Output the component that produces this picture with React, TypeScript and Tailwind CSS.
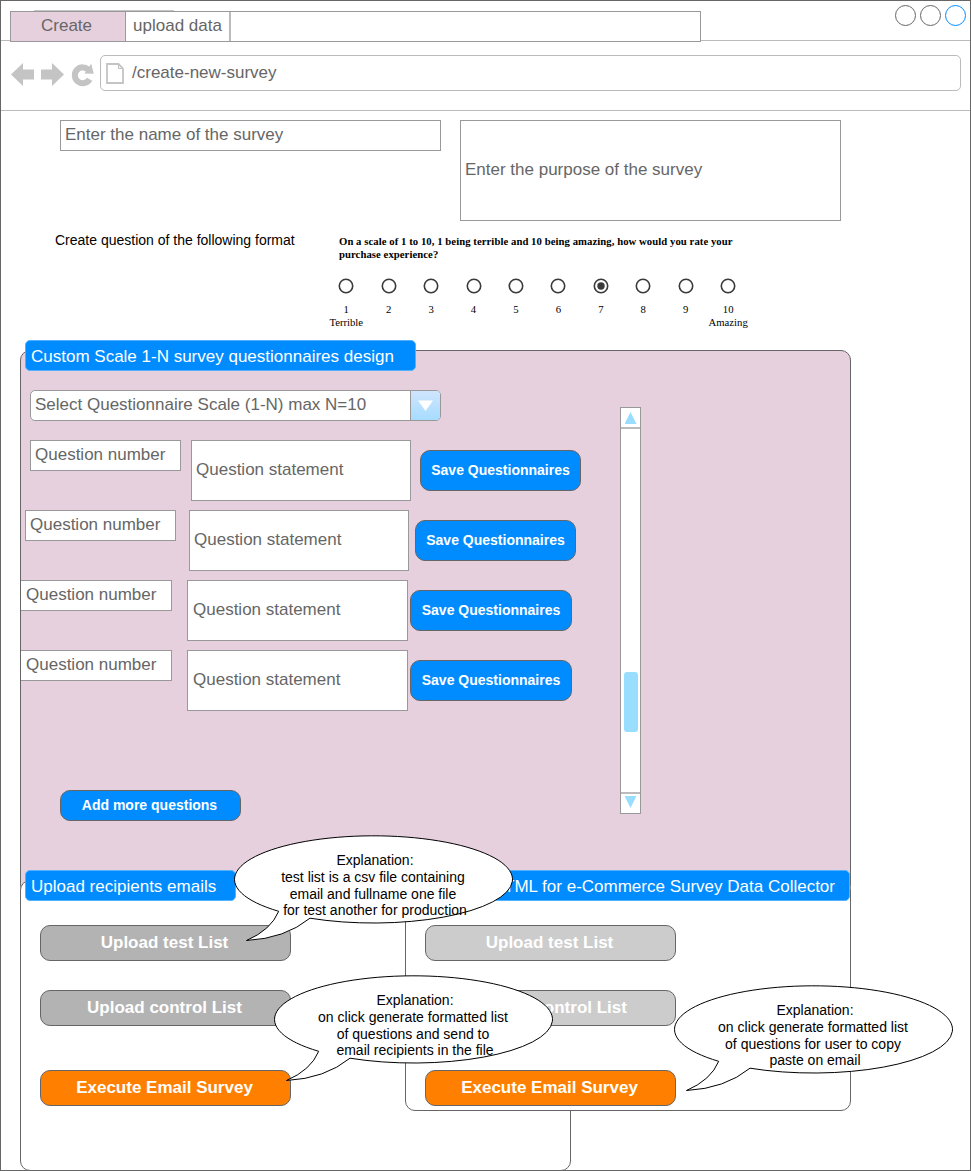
import React from "react";

const rows = [
  { pad: "pl-[9px]", num: "w-[151px] border pl-[4px]", gap: "ml-[10px] w-[220px] pl-[4px]", btn: "ml-[9px] w-[161px]" },
  { pad: "pl-[4px]", num: "w-[151px] border pl-[4px]", gap: "ml-[13px] w-[220px] pl-[4px]", btn: "ml-[6px] w-[161px]" },
  { pad: "pl-0", num: "w-[151px] border border-l-0 pl-[5px]", gap: "ml-[15px] w-[221px] pl-[5px]", btn: "ml-[2px] w-[162px]" },
  { pad: "pl-0", num: "w-[151px] border border-l-0 pl-[5px]", gap: "ml-[15px] w-[221px] pl-[5px]", btn: "ml-[2px] w-[162px]" },
];

const scale = [
  { n: "1", label: "Terrible" },
  { n: "2" },
  { n: "3" },
  { n: "4" },
  { n: "5" },
  { n: "6" },
  { n: "7", checked: true },
  { n: "8" },
  { n: "9" },
  { n: "10", label: "Amazing" },
];

function Radio({ checked }: { checked?: boolean }) {
  return (
    <svg className="block" width="16" height="16" viewBox="0 0 16 16">
      <circle cx="8" cy="8" r="6.7" fill="#fff" stroke="#3a3a3a" strokeWidth="1.6" />
      {checked && <circle cx="8" cy="8" r="3.7" fill="#3a3a3a" />}
    </svg>
  );
}

function Callout({ place, lines }: { place: string; lines: string[] }) {
  return (
    <div className={`absolute z-20 h-[108px] w-[280px] ${place}`}>
      <svg className="absolute left-0 top-0 block overflow-visible" width="280" height="108" viewBox="0 0 280 108">
        <path
          d="M43.7 76.3 A139 43.6 0 1 1 75 83.2 Q50 103.5 11.5 105.5 Q36 95 43.7 76.3 Z"
          fill="#fff"
          stroke="#000"
          strokeWidth="1"
        />
      </svg>
      <div className="relative flex flex-col items-center pt-[17px] text-[14px] leading-[16.8px] text-black">
        {lines.map((l, i) => (
          <span key={l} className={`whitespace-pre ${i === 1 || i === 2 ? "-ml-[4px]" : ""}`}>
            {l}
          </span>
        ))}
      </div>
    </div>
  );
}

function PanelTitle({ place, children }: { place: string; children: React.ReactNode }) {
  return (
    <div
      className={`absolute flex h-[31px] items-center whitespace-nowrap rounded-[5px] border border-[#55b1ff] bg-[#008cff] pl-[5px] pt-[2px] text-[17px] text-white ${place}`}
    >
      {children}
    </div>
  );
}

function ListButton({ tone, children }: { tone: string; children: React.ReactNode }) {
  return (
    <button
      className={`flex h-[36px] w-[251px] items-center justify-center rounded-[10px] border border-[#666] pb-px pr-[2px] text-[17px] font-bold text-white ${tone}`}
    >
      {children}
    </button>
  );
}

export default function App() {
  return (
    <div className="relative h-[1171px] w-[971px] overflow-hidden border border-[#666] bg-white font-['Liberation_Sans',Arial,sans-serif] text-[17px] text-[#666]">
      {/* window header */}
      <header className="flex h-[40px] justify-between border-b border-[#bbb]">
        <div className="relative ml-[9px] mt-[10px] flex h-[31px] w-[691px] border border-[#999] bg-white">
          <div className="absolute -top-[2px] left-[23px] h-px w-[140px] bg-[#c4c4c4]" />
          <div className="flex w-[115px] items-center justify-center border-r border-[#999] bg-[#e6d0de] pb-[2px] pr-[3px]">Create</div>
          <div className="flex w-[105px] items-center justify-center border-r-2 border-[#bbb] pb-[2px]">upload data</div>
        </div>
        <svg className="mr-[3px] block" width="74" height="30" viewBox="893 1 74 30">
          <circle cx="905.5" cy="15.5" r="10" fill="#fff" stroke="#666" />
          <circle cx="930.5" cy="15.5" r="10" fill="#fff" stroke="#666" />
          <circle cx="955.5" cy="15.5" r="10" fill="#fff" stroke="#008cff" />
        </svg>
      </header>

      {/* address bar */}
      <nav className="flex h-[70px] border-b border-[#bbb] pt-[14px]">
        <svg className="block" width="99" height="36" viewBox="1 55 99 36">
          <g fill="#c4c4c4">
            <path d="M11 74.5 L23 63 V69.5 H34 V79.5 H23 V86 Z" />
            <path d="M64 74.5 L52 63 V69.5 H41 V79.5 H52 V86 Z" />
            <path d="M91.2 63.8 L93.8 73.8 L84.5 73.6 Z" />
          </g>
          <path d="M88.8 70.2 A7.9 7.9 0 1 0 89.6 79.2" fill="none" stroke="#c4c4c4" strokeWidth="6" />
        </svg>
        <div className="flex h-[36px] w-[861px] items-center rounded-[5px] border border-[#bbb] pl-[4px]">
          <svg className="block" width="20" height="24" viewBox="0 0 20 24">
            <path d="M2 3 H13.5 L18 7.5 V22 H2 Z" fill="#fff" stroke="#c4c4c4" strokeWidth="1.8" />
            <path d="M13.5 3 V7.5 H18" fill="none" stroke="#c4c4c4" strokeWidth="1.2" />
          </svg>
          <span className="ml-[7px]">/create-new-survey</span>
        </div>
      </nav>

      {/* survey name and purpose */}
      <section className="flex items-start gap-[19px] pl-[59px] pt-[9px]">
        <div className="flex h-[31px] w-[381px] items-center border border-[#999] pb-[1px] pl-[4px]">Enter the name of the survey</div>
        <div className="flex h-[101px] w-[381px] items-center border border-[#999] pb-[1px] pl-[4px]">Enter the purpose of the survey</div>
      </section>

      {/* question format preview */}
      <section className="flex h-[129px] text-black">
        <p className="w-[262px] pl-[54px] pt-[11px] text-[14px] leading-[17px] whitespace-nowrap">Create question of the following format</p>
        <div className="ml-[62px] pt-[14px] font-['Liberation_Serif','Times_New_Roman',serif]">
          <p className="pl-[14px] text-[10.7px] font-bold leading-[12.5px] tracking-[0.062px] whitespace-nowrap">
            On a scale of 1 to 10, 1 being terrible and 10 being amazing, how would you rate your
            <br />
            purchase experience?
          </p>
          <div className="mt-[18px] flex">
            {scale.map((s) => (
              <div key={s.n} className="flex w-[42.45px] flex-col items-center">
                <Radio checked={s.checked} />
                <span className="mt-[9px] text-[10.7px] leading-[13px]">{s.n}</span>
                <span className="text-[10.7px] leading-[13px]">{s.label}</span>
              </div>
            ))}
          </div>
        </div>
      </section>

      {/* questionnaire design */}
      <section className="relative ml-[19px] flex h-[545px] w-[831px] rounded-[10px] border border-[#666] bg-[#e6d0de]">
        <PanelTitle place="-top-[11px] left-[4px] w-[391px]">Custom Scale 1-N survey questionnaires design</PanelTitle>
        <div className="flex w-[599px] flex-col pt-[39px]">
          <div className="ml-[9px] flex h-[31px] w-[411px] overflow-hidden rounded-[5px] border border-[#999] bg-white">
            <div className="flex w-[379px] items-center pb-[1px] pl-[4px]">Select Questionnaire Scale (1-N) max N=10</div>
            <div className="flex w-[30px] items-center justify-center border-l border-[#999] bg-linear-to-b from-[#cfe5fd] to-[#a6dcff]">
              <svg className="block" width="15" height="11" viewBox="0 0 15 11">
                <path d="M0 0.5 H15 L7.5 11 Z" fill="#fff" />
              </svg>
            </div>
          </div>
          <div className="mt-[19px] flex flex-col gap-[9px]">
            {rows.map((r, i) => (
              <div key={i} className={`flex h-[61px] items-start ${r.pad}`}>
                <div className={`flex h-[31px] shrink-0 items-center border-[#999] bg-white pb-[1px] ${r.num}`}>Question number</div>
                <div className={`flex h-[61px] shrink-0 items-center border border-[#999] bg-white pb-[1px] ${r.gap}`}>Question statement</div>
                <button className={`mt-[10px] flex h-[41px] shrink-0 items-center justify-center rounded-[10px] border border-[#666] bg-[#008cff] pb-px text-[14px] font-bold text-white ${r.btn}`}>
                  Save Questionnaires
                </button>
              </div>
            ))}
          </div>
          <button className="ml-[39px] mt-[79px] flex h-[31px] w-[181px] items-center justify-center rounded-[10px] border border-[#666] bg-[#008cff] pb-px pr-[2px] text-[14px] font-bold text-white">
            Add more questions
          </button>
        </div>
        <div className="mt-[56px] flex h-[407px] w-[21px] flex-col items-center border border-[#999] bg-white">
          <div className="flex h-[21px] w-full items-center justify-center border-b-2 border-[#bbb]">
            <svg className="block" width="12" height="12" viewBox="0 0 12 12">
              <path d="M5.5 0 L11.5 12 H-0.5 Z" fill="#99ddff" />
            </svg>
          </div>
          <div className="mt-[243px] h-[60px] w-[14px] rounded-[3px] bg-[#99ddff]" />
          <div className="mt-auto flex h-[21px] w-full items-start justify-center border-t-2 border-[#bbb] pt-[2px]">
            <svg className="block" width="12" height="12" viewBox="0 0 12 12">
              <path d="M-0.5 0 H11.5 L5.5 12 Z" fill="#99ddff" />
            </svg>
          </div>
        </div>
      </section>

      {/* upload and HTML export panels */}
      <section className="relative -mt-[15px] ml-[19px] flex items-start">
        <div className="relative flex h-[291px] w-[551px] flex-col rounded-[10px] border border-[#666] bg-white pl-[19px] pt-[44px]">
          <PanelTitle place="-top-[11px] left-[4px] w-[211px]">Upload recipients emails</PanelTitle>
          <ListButton tone="bg-[#b3b3b3]">Upload test List</ListButton>
          <div className="mt-[29px]">
            <ListButton tone="bg-[#b3b3b3]">Upload control List</ListButton>
          </div>
          <div className="mt-[44px]">
            <ListButton tone="bg-[#ff8000]">Execute Email Survey</ListButton>
          </div>
        </div>
        <div className="relative -ml-[166px] flex h-[231px] w-[446px] flex-col rounded-[10px] border border-[#666] bg-white pl-[19px] pt-[44px]">
          <PanelTitle place="-top-[11px] right-0 w-[381px] justify-end pr-[14px]">HTML for e-Commerce Survey Data Collector</PanelTitle>
          <ListButton tone="bg-[#ccc]">Upload test List</ListButton>
          <div className="mt-[29px]">
            <ListButton tone="bg-[#ccc]">Upload control List</ListButton>
          </div>
          <div className="mt-[44px]">
            <ListButton tone="bg-[#ff8000]">Execute Email Survey</ListButton>
          </div>
        </div>
      </section>

      <Callout
        place="left-[234px] top-[834px]"
        lines={["Explanation:", "test list is a csv file containing", "email and fullname one file", "for test another for production"]}
      />
      <Callout
        place="left-[274px] top-[974px]"
        lines={["Explanation:", "on click generate formatted list", "of questions and send to", "email recipients in the file"]}
      />
      <Callout
        place="left-[674px] top-[984px]"
        lines={["Explanation:", "on click generate formatted list", "of questions for user to copy", "paste on email"]}
      />
    </div>
  );
}
